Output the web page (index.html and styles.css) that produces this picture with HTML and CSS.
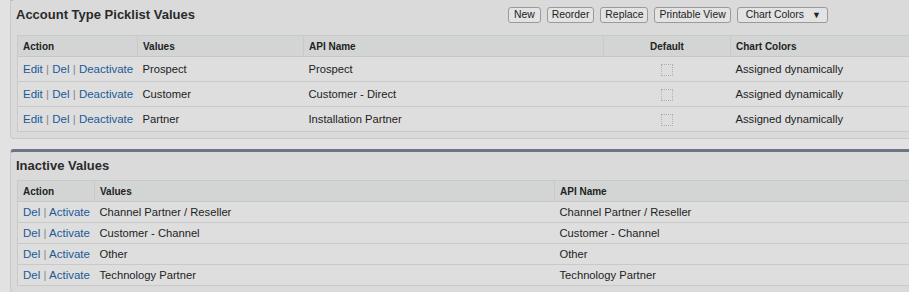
FILE: index.html
```
<!DOCTYPE html>
<html lang="en">
<head>
    <meta charset="UTF-8">
    <title>Account Type Picklist Values</title>
    <link rel="stylesheet" href="styles.css">
</head>
<body>
    <div class="page-block first">
        <div class="pb-header with-buttons">
            <h3 class="pb-title">Account Type Picklist Values</h3>
            <div class="pb-buttons">
                <button class="btn btn-new">New</button>
                <button class="btn">Reorder</button>
                <button class="btn">Replace</button>
                <button class="btn">Printable View</button>
                <button class="btn btn-menu">Chart Colors <span class="caret">&#9660;</span></button>
            </div>
        </div>
        <table class="list active-list">
            <thead>
                <tr>
                    <th class="col-action">Action</th>
                    <th class="col-values">Values</th>
                    <th class="col-api">API Name</th>
                    <th class="col-default">Default</th>
                    <th>Chart Colors</th>
                </tr>
            </thead>
            <tbody>
                <tr>
                    <td class="actions"><a href="#">Edit</a> | <a href="#">Del</a> | <a href="#">Deactivate</a></td>
                    <td>Prospect</td>
                    <td>Prospect</td>
                    <td class="center"><span class="checkbox"></span></td>
                    <td>Assigned dynamically</td>
                </tr>
                <tr>
                    <td class="actions"><a href="#">Edit</a> | <a href="#">Del</a> | <a href="#">Deactivate</a></td>
                    <td>Customer</td>
                    <td>Customer - Direct</td>
                    <td class="center"><span class="checkbox"></span></td>
                    <td>Assigned dynamically</td>
                </tr>
                <tr>
                    <td class="actions"><a href="#">Edit</a> | <a href="#">Del</a> | <a href="#">Deactivate</a></td>
                    <td>Partner</td>
                    <td>Installation Partner</td>
                    <td class="center"><span class="checkbox"></span></td>
                    <td>Assigned dynamically</td>
                </tr>
            </tbody>
        </table>
    </div>

    <div class="page-block">
        <div class="pb-header">
            <h3 class="pb-title">Inactive Values</h3>
        </div>
        <table class="list inactive-list">
            <thead>
                <tr>
                    <th class="col-action">Action</th>
                    <th class="col-values">Values</th>
                    <th>API Name</th>
                </tr>
            </thead>
            <tbody>
                <tr>
                    <td class="actions"><a href="#">Del</a> | <a href="#">Activate</a></td>
                    <td>Channel Partner / Reseller</td>
                    <td>Channel Partner / Reseller</td>
                </tr>
                <tr>
                    <td class="actions"><a href="#">Del</a> | <a href="#">Activate</a></td>
                    <td>Customer - Channel</td>
                    <td>Customer - Channel</td>
                </tr>
                <tr>
                    <td class="actions"><a href="#">Del</a> | <a href="#">Activate</a></td>
                    <td>Other</td>
                    <td>Other</td>
                </tr>
                <tr>
                    <td class="actions"><a href="#">Del</a> | <a href="#">Activate</a></td>
                    <td>Technology Partner</td>
                    <td>Technology Partner</td>
                </tr>
            </tbody>
        </table>
    </div>
</body>
</html>
```

FILE: styles.css
```
body {
    font-family: "Liberation Sans", Arial, sans-serif;
    font-size: 11.2px;
    color: #222;
    background-color: #e2e2e2;
    margin: 0;
    padding: 0 0 0 10px;
    overflow: hidden;
}

.page-block {
    width: 920px;
    background: #dadada;
    border: 1px solid #c8c8c8;
    border-top: 3px solid #6d7486;
    border-radius: 4px;
    padding: 0 0 6px 6px;
    margin-bottom: 10px;
}

.page-block.first {
    margin-top: -3px;
}

.pb-header {
    display: flex;
    align-items: center;
    height: 28px;
}

.pb-header.with-buttons {
    height: 35px;
    align-items: flex-start;
}

.pb-title {
    margin: 0 0 0 -1px;
    font-size: 13px;
    font-weight: bold;
    line-height: 16px;
    color: #2a2a2a;
}

.with-buttons .pb-title {
    width: 492px;
    margin-top: 7px;
}

.pb-buttons {
    display: flex;
    gap: 6px;
    margin-top: 7px;
}

.btn {
    font-family: "Liberation Sans", Arial, sans-serif;
    font-size: 10.4px;
    color: #222;
    height: 16px;
    line-height: 14px;
    padding: 0 4px;
    background: #e3e3e3;
    border: 1px solid #9a9a9a;
    border-radius: 3px;
}

.btn-new {
    padding: 0 5px;
}

.btn-menu {
    padding: 0 6px 0 8px;
}

.caret {
    font-size: 9px;
    margin-left: 5px;
}

.list {
    border-collapse: collapse;
    table-layout: fixed;
    width: 900px;
    border: 1px solid #c9c9c9;
    background: #dedede;
}

.list th {
    text-align: left;
    font-size: 10px;
    font-weight: bold;
    background: #d3d5d5;
    height: 20px;
    padding: 0 5px;
    border-bottom: 1px solid #c6c6c6;
    border-left: 1px solid #c9c9c9;
}

.list th:first-child {
    border-left: none;
}

.list td {
    padding: 0 5px;
    border-bottom: 1px solid #c9c9c9;
    white-space: nowrap;
    overflow: hidden;
}

.active-list td {
    height: 24px;
}

.inactive-list td {
    height: 20px;
}

.active-list .col-action { width: 109px; }
.active-list .col-values { width: 155px; }
.active-list .col-api { width: 289px; }
.active-list .col-default { width: 116px; text-align: center; }

.inactive-list .col-action { width: 66px; }
.inactive-list .col-values { width: 449px; }

.actions {
    color: #888;
    padding-top: 2px;
    font-size: 11.5px;
}

.actions a {
    color: #1c5a96;
    text-decoration: none;
}

.center {
    text-align: center;
}

.checkbox {
    display: inline-block;
    width: 10px;
    height: 10px;
    border: 1px dotted #b0b0b0;
    vertical-align: middle;
}
```
